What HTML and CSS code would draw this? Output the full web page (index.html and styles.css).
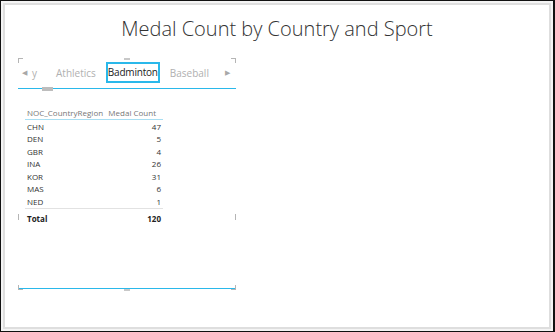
FILE: index.html
```html
<!DOCTYPE html>
<html>
    <head>
        <link rel="stylesheet" href="styles.css">
    </head>
    <body>
        <div class="frame">
            <div class="canvas">
                <h1 class="title">Medal Count by Country and Sport</h1>

                <div class="visual">
                    <span class="corner tl"></span>
                    <span class="corner tr"></span>
                    <span class="handle top"></span>

                    <div class="slicer">
                        <span class="arrow">&#9664;</span>
                        <span class="item cut">y</span>
                        <span class="item">Athletics</span>
                        <span class="item selected">Badminton</span>
                        <span class="item">Baseball</span>
                        <span class="arrow right">&#9654;</span>
                    </div>
                    <div class="track">
                        <span class="thumb"></span>
                    </div>

                    <table class="grid">
                        <thead>
                            <tr><th>NOC_CountryRegion</th><th class="num">Medal Count</th></tr>
                        </thead>
                        <tbody>
                            <tr><td>CHN</td><td class="num">47</td></tr>
                            <tr><td>DEN</td><td class="num">5</td></tr>
                            <tr><td>GBR</td><td class="num">4</td></tr>
                            <tr><td>INA</td><td class="num">26</td></tr>
                            <tr><td>KOR</td><td class="num">31</td></tr>
                            <tr><td>MAS</td><td class="num">6</td></tr>
                            <tr><td>NED</td><td class="num">1</td></tr>
                        </tbody>
                        <tfoot>
                            <tr><td>Total</td><td class="num">120</td></tr>
                        </tfoot>
                    </table>

                    <span class="tick left"></span>
                    <span class="tick right"></span>

                    <div class="bottomLine"></div>
                    <span class="corner bl"></span>
                    <span class="corner br"></span>
                    <span class="handle bottom"></span>
                </div>
            </div>
        </div>
    </body>
</html>
```

FILE: styles.css
```css
body{
    margin:0px;
    padding:0px;
    font-family:"Open Sans", "Noto Sans", sans-serif;
}

.frame{
    width:555px;
    height:332px;
    box-sizing:border-box;
    border:1px solid #111;
    border-right-width:2px;
    padding:2px;
    background-color:#f4f4f4;
}

.canvas{
    height:100%;
    box-sizing:border-box;
    border:2px solid #dedede;
    background-color:white;
    padding-left:13px;
}

.title{
    margin:0px;
    height:53px;
    box-sizing:border-box;
    padding-top:10px;
    font-size:20px;
    font-weight:300;
    color:#333;
    text-align:center;
    padding-right:13px;
}

.visual{
    position:relative;
    width:218px;
    height:233px;
}

/* resize corners and handles */
.corner{
    position:absolute;
    width:4px;
    height:4px;
    border:0px solid #b5b5b5;
}
.tl{ left:0; top:0; border-top-width:1px; border-left-width:1px; }
.tr{ right:0; top:0; border-top-width:1px; border-right-width:1px; }
.bl{ left:0; top:227px; border-bottom-width:1px; border-left-width:1px; }
.br{ right:0; top:227px; border-bottom-width:1px; border-right-width:1px; }

.handle{
    position:absolute;
    left:106px;
    width:6px;
    height:2px;
    background-color:#c8c8c8;
}
.handle.top{ top:0px; }
.handle.bottom{ top:231px; }

.tick{
    position:absolute;
    top:156px;
    width:1px;
    height:6px;
    background-color:#b5b5b5;
}
.tick.left{ left:0px; }
.tick.right{ right:0px; }

/* slicer */
.slicer{
    display:flex;
    align-items:center;
    height:21px;
    padding-top:4px;
    padding-left:4px;
    font-size:10px;
    color:#b0b0b0;
}
.arrow{
    font-size:7px;
    color:#a8a8a8;
    margin-right:5px;
}
.arrow.right{
    margin-left:auto;
    margin-right:6px;
}
.item{
    margin-right:10px;
}
.item.cut{
    margin-right:19px;
}
.item.selected{
    color:#222;
    border:2px solid #2ab8ea;
    padding:1px 0px 2px 0px;
    margin-right:10px;
    letter-spacing:-0.2px;
}

.track{
    position:relative;
    margin-top:5px;
    height:1px;
    background-color:#2ab8ea;
}
.thumb{
    position:absolute;
    left:24px;
    top:-1px;
    width:11px;
    height:4px;
    background-color:#bdbdbd;
}

/* table */
.grid{
    margin-top:18px;
    margin-left:7px;
    width:138px;
    border-collapse:collapse;
    font-size:8px;
    color:#333;
}
.grid th{
    font-weight:normal;
    color:#777;
    text-align:left;
    padding:0px 2px 1px 2px;
    border-bottom:1px solid #a8def2;
    height:10px;
}
.grid th.num{
    padding-right:7px;
}
.grid td{
    padding:0px 2px;
    height:12.5px;
}
.grid .num{
    text-align:right;
}
.grid tfoot td{
    font-weight:bold;
    color:#222;
    border-top:1px solid #e2e2e2;
    height:20px;
}

.bottomLine{
    position:absolute;
    left:0px;
    right:0px;
    top:230px;
    height:1px;
    background-color:#2ab8ea;
}
```
